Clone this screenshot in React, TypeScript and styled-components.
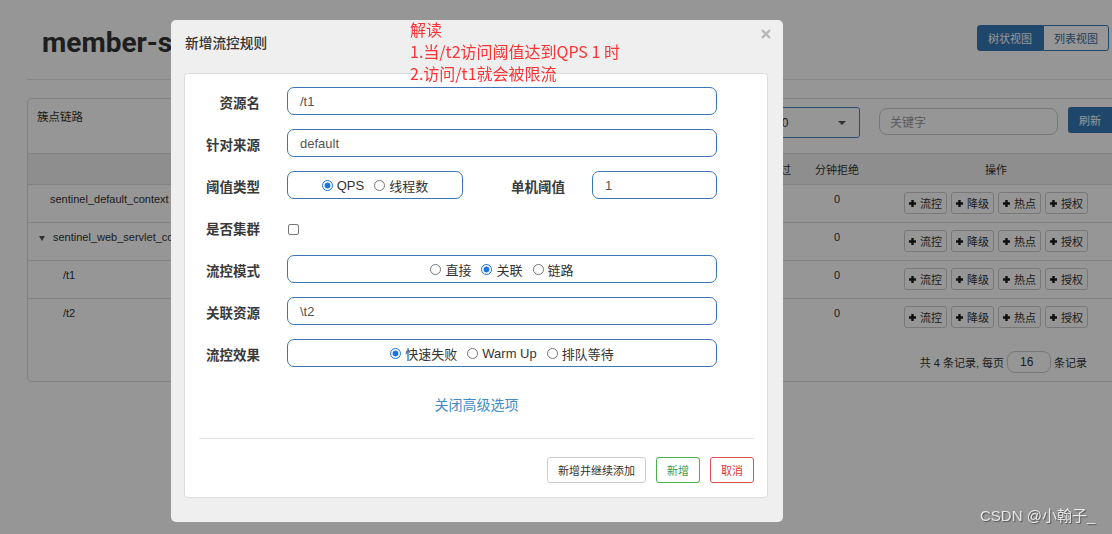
import styled, { createGlobalStyle } from "styled-components";

const GlobalStyle = createGlobalStyle`
  html, body {
    margin: 0;
    padding: 0;
    background: #fff;
    overflow: hidden;
  }
  body {
    width: 1112px;
    height: 534px;
    font-family: "Liberation Sans", "Noto Sans CJK SC", sans-serif;
    color: #333;
  }
  * { box-sizing: border-box; }
`;

const FONT = `"Liberation Sans", "Noto Sans CJK SC", sans-serif`;

/* ---------- page under the dialog ---------- */

const Page = styled.div`
  width: 1112px;
  height: 534px;
  padding-left: 27px;
  overflow: hidden;
`;

const TopBar = styled.div`
  display: flex;
  justify-content: space-between;
  align-items: flex-start;
  height: 79px;
  padding: 0 3px 0 15px;
`;

const Title = styled.h1`
  margin: 29px 0 0;
  font: 700 28px/28px Roboto, sans-serif;
  color: #333;
  white-space: nowrap;
`;

const ViewSwitch = styled.div`
  display: flex;
  margin-top: 25px;
`;

const ViewBtn = styled.div<{ $active?: boolean }>`
  height: 26px;
  padding: 0 10px;
  display: flex;
  align-items: center;
  font-size: 11px;
  border: 1px solid #337ab7;
  background: ${({ $active }) => ($active ? "#337ab7" : "#fff")};
  color: ${({ $active }) => ($active ? "#fff" : "#3b6a96")};
  border-radius: ${({ $active }) => ($active ? "3px 0 0 3px" : "0 3px 3px 0")};
`;

const Rule = styled.div`
  height: 1px;
  background: #e5e5e5;
`;

const Panel = styled.div`
  width: 1095px;
  margin-top: 18px;
  border: 1px solid #ddd;
  border-radius: 4px;
`;

const PanelHead = styled.div`
  display: flex;
  justify-content: space-between;
  align-items: flex-start;
  height: 55px;
  padding: 9px 9px 0 9px;
  border-bottom: 1px solid #ddd;
`;

const PanelTitle = styled.div`
  font-size: 11.5px;
  line-height: 18px;
`;

const Tools = styled.div`
  display: flex;
  align-items: flex-start;
  margin-top: -1px;
`;

const Select = styled.div`
  width: 100px;
  height: 31px;
  border: 1px solid #4a84c0;
  border-radius: 3px;
  display: flex;
  align-items: center;
  justify-content: space-between;
  padding: 0 13px 0 14px;
  font-size: 12px;
`;

const Caret = styled.span`
  width: 0;
  height: 0;
  border-left: 4.5px solid transparent;
  border-right: 4.5px solid transparent;
  border-top: 4px solid #555;
`;

const Search = styled.div`
  width: 179px;
  height: 27px;
  margin: 1px 0 0 19px;
  border: 1px solid #ccc;
  border-radius: 8px;
  padding-left: 10px;
  display: flex;
  align-items: center;
  font-size: 12px;
  color: #999;
`;

const Refresh = styled.div`
  width: 44px;
  height: 26px;
  margin-left: 10px;
  background: #337ab7;
  color: #fff;
  border-radius: 3px 0 0 3px;
  display: flex;
  align-items: center;
  justify-content: center;
  font-size: 11px;
`;

const Row = styled.div<{ $head?: boolean }>`
  display: grid;
  grid-template-columns: 1fr repeat(6, 68px) 250px;
  height: ${({ $head }) => ($head ? "30px" : "38px")};
  align-items: ${({ $head }) => ($head ? "center" : "start")};
  background: ${({ $head }) => ($head ? "#f2f2f2" : "transparent")};
  border-top: ${({ $head }) => ($head ? "none" : "1px solid #ddd")};
  font-size: 11px;
`;

const HeadCell = styled.div`
  text-align: center;
  white-space: nowrap;
`;

const Cell = styled.div`
  text-align: center;
  padding-top: 6px;
  line-height: 17px;
`;

const NameCell = styled.div<{ $indent: number }>`
  display: flex;
  align-items: center;
  gap: 8px;
  padding: 6px 0 0 ${({ $indent }) => $indent}px;
  line-height: 17px;
  white-space: nowrap;
  overflow: hidden;
`;

const TreeCaret = styled.span`
  width: 0;
  height: 0;
  border-left: 3.5px solid transparent;
  border-right: 3.5px solid transparent;
  border-top: 5px solid #555;
  margin-top: 1px;
`;

const Actions = styled.div`
  display: flex;
  justify-content: center;
  gap: 4px;
  padding-top: 7px;
`;

const ActBtn = styled.div`
  width: 43px;
  height: 22px;
  border: 1px solid #ccc;
  border-radius: 3px;
  background: #fff;
  display: flex;
  align-items: center;
  justify-content: center;
  gap: 4px;
  font-size: 11px;
`;

const Pager = styled.div`
  display: flex;
  justify-content: flex-end;
  align-items: center;
  height: 45px;
  padding: 14px 34px 8px 0;
  font-size: 11px;
  border-top: 1px solid transparent;
`;

const PageSize = styled.div`
  width: 44px;
  height: 22px;
  margin: 0 3px;
  border: 1px solid #ccc;
  border-radius: 8px;
  padding-left: 12px;
  display: flex;
  align-items: center;
  font-size: 12px;
`;

/* ---------- overlay and dialog ---------- */

const Backdrop = styled.div`
  position: fixed;
  inset: 0;
  background: rgba(0, 0, 0, 0.41);
`;

const Modal = styled.div`
  position: fixed;
  left: 171px;
  top: 20px;
  width: 612px;
  height: 502px;
  background: #efefef;
  border-radius: 5px;
  padding: 0 15px 0 13px;
  font-family: ${FONT};
`;

const ModalHead = styled.div`
  display: flex;
  justify-content: space-between;
  align-items: flex-start;
  height: 53px;
  padding: 9px 0 0 1px;
  margin-right: -3px;
`;

const ModalTitle = styled.div`
  margin-top: 6px;
  font-size: 13.7px;
  font-weight: 500;
  line-height: 18px;
  color: #333;
`;

const Card = styled.div`
  background: #fff;
  border: 1px solid #ddd;
  border-radius: 4px;
  padding: 13px 13px 14px 14px;
`;

const Form = styled.div`
  display: flex;
  flex-direction: column;
  gap: 14px;
`;

const FormRow = styled.div`
  display: flex;
  align-items: center;
  height: 28px;
`;

const Label = styled.div<{ $w?: number; $gap?: number }>`
  width: ${({ $w }) => $w ?? 61}px;
  margin-left: ${({ $gap }) => $gap ?? 0}px;
  margin-right: 27px;
  padding-top: 2px;
  text-align: right;
  font-size: 13.5px;
  font-weight: 700;
  color: #3a3a3a;
  white-space: nowrap;
`;

const Field = styled.div<{ $w: number }>`
  width: ${({ $w }) => $w}px;
  height: 28px;
  border: 1px solid #3b76b4;
  border-radius: 7px;
  display: flex;
  align-items: center;
  padding-left: 12px;
  font-size: 13px;
  color: #555;
`;

const RadioField = styled(Field)`
  justify-content: center;
  padding: 1px 0 0;
  gap: 10px;
  color: #333;
`;

const Option = styled.label`
  display: inline-flex;
  align-items: center;
  gap: 4px;
  white-space: nowrap;
`;

const Radio = styled.span<{ $on?: boolean }>`
  width: 11px;
  height: 11px;
  flex: none;
  border-radius: 50%;
  border: 1px solid ${({ $on }) => ($on ? "#1b74e4" : "#767676")};
  background: ${({ $on }) =>
    $on ? "radial-gradient(circle, #1b74e4 0 2.6px, #fff 3.3px)" : "#fff"};
`;

const Check = styled.span`
  width: 11px;
  height: 11px;
  margin: 5px 0 0 1px;
  border: 1px solid #777;
  border-radius: 2px;
  background: #fff;
`;

const Toggle = styled.div`
  margin-top: 28px;
  text-align: center;
  font-size: 14px;
  line-height: 20px;
  color: #428bca;
`;

const Divider = styled.div`
  height: 1px;
  margin-top: 23px;
  background: #e5e5e5;
`;

const Footer = styled.div`
  display: flex;
  justify-content: flex-end;
  gap: 10px;
  margin-top: 18px;
`;

const FootBtn = styled.div<{ $tone: "plain" | "ok" | "cancel" }>`
  height: 26px;
  padding: 0 10px;
  display: flex;
  align-items: center;
  font-size: 11px;
  background: #fff;
  border-radius: 3px;
  border: 1px solid
    ${({ $tone }) => ($tone === "ok" ? "#4cae4c" : $tone === "cancel" ? "#d9534f" : "#ccc")};
  color: ${({ $tone }) => ($tone === "ok" ? "#3c9a3c" : $tone === "cancel" ? "#d9343a" : "#333")};
`;

const Note = styled.div`
  position: fixed;
  left: 410px;
  top: 19px;
  font: 16px/21.8px "Noto Sans CJK SC", sans-serif;
  color: #fa3434;
  white-space: pre;
`;

const Watermark = styled.div`
  position: fixed;
  left: 980px;
  top: 506px;
  font: 15px/20px ${FONT};
  color: rgba(255, 255, 255, 0.8);
  text-shadow: 1px 1px 1px rgba(0, 0, 0, 0.45);
`;

const Plus = () => (
  <svg width="7" height="7" viewBox="0 0 7 7">
    <path d="M2.3 0h2.4v2.3H7v2.4H4.7V7H2.3V4.7H0V2.3h2.3z" fill="#1a1a1a" />
  </svg>
);

const Close = () => (
  <svg width="10" height="10" viewBox="0 0 10 10">
    <path d="M1 1l8 8M9 1l-8 8" stroke="#b8b8b8" strokeWidth="2.4" />
  </svg>
);

const rows = [
  { name: "sentinel_default_context", indent: 22 },
  { name: "sentinel_web_servlet_context", indent: 11, open: true },
  { name: "/t1", indent: 35 },
  { name: "/t2", indent: 35 },
];

const App = () => {
  return (
    <>
      <GlobalStyle />
      <Page>
        <TopBar>
          <Title>member-service</Title>
          <ViewSwitch>
            <ViewBtn $active>树状视图</ViewBtn>
            <ViewBtn>列表视图</ViewBtn>
          </ViewSwitch>
        </TopBar>
        <Rule />
        <Panel>
          <PanelHead>
            <PanelTitle>簇点链路</PanelTitle>
            <Tools>
              <Select>
                10
                <Caret />
              </Select>
              <Search>关键字</Search>
              <Refresh>刷新</Refresh>
            </Tools>
          </PanelHead>
          <Row $head>
            <HeadCell />
            <HeadCell>通过QPS</HeadCell>
            <HeadCell>拒绝QPS</HeadCell>
            <HeadCell>并发数</HeadCell>
            <HeadCell>平均RT</HeadCell>
            <HeadCell>分钟通过</HeadCell>
            <HeadCell>分钟拒绝</HeadCell>
            <HeadCell>操作</HeadCell>
          </Row>
          {rows.map((r) => (
            <Row key={r.name}>
              <NameCell $indent={r.indent}>
                {r.open && <TreeCaret />}
                {r.name}
              </NameCell>
              <Cell>0</Cell>
              <Cell>0</Cell>
              <Cell>0</Cell>
              <Cell>0</Cell>
              <Cell>0</Cell>
              <Cell>0</Cell>
              <Actions>
                {["流控", "降级", "热点", "授权"].map((a) => (
                  <ActBtn key={a}>
                    <Plus />
                    {a}
                  </ActBtn>
                ))}
              </Actions>
            </Row>
          ))}
          <Pager>
            共 4 条记录, 每页
            <PageSize>16</PageSize>
            条记录
          </Pager>
        </Panel>
      </Page>

      <Backdrop />

      <Modal>
        <ModalHead>
          <ModalTitle>新增流控规则</ModalTitle>
          <Close />
        </ModalHead>
        <Card>
          <Form>
            <FormRow>
              <Label>资源名</Label>
              <Field $w={430}>/t1</Field>
            </FormRow>
            <FormRow>
              <Label>针对来源</Label>
              <Field $w={430}>default</Field>
            </FormRow>
            <FormRow>
              <Label>阈值类型</Label>
              <RadioField $w={176}>
                <Option><Radio $on />QPS</Option>
                <Option><Radio />线程数</Option>
              </RadioField>
              <Label $w={56} $gap={46}>单机阈值</Label>
              <Field $w={125}>1</Field>
            </FormRow>
            <FormRow>
              <Label>是否集群</Label>
              <Check />
            </FormRow>
            <FormRow>
              <Label>流控模式</Label>
              <RadioField $w={430}>
                <Option><Radio />直接</Option>
                <Option><Radio $on />关联</Option>
                <Option><Radio />链路</Option>
              </RadioField>
            </FormRow>
            <FormRow>
              <Label>关联资源</Label>
              <Field $w={430}>\t2</Field>
            </FormRow>
            <FormRow>
              <Label>流控效果</Label>
              <RadioField $w={430}>
                <Option><Radio $on />快速失败</Option>
                <Option><Radio />Warm Up</Option>
                <Option><Radio />排队等待</Option>
              </RadioField>
            </FormRow>
          </Form>
          <Toggle>关闭高级选项</Toggle>
          <Divider />
          <Footer>
            <FootBtn $tone="plain">新增并继续添加</FootBtn>
            <FootBtn $tone="ok">新增</FootBtn>
            <FootBtn $tone="cancel">取消</FootBtn>
          </Footer>
        </Card>
      </Modal>

      <Note>{"解读\n1.当/t2访问阈值达到QPS 1 时\n2.访问/t1就会被限流"}</Note>
      <Watermark>CSDN @小翰子_</Watermark>
    </>
  );
};

export default App;
